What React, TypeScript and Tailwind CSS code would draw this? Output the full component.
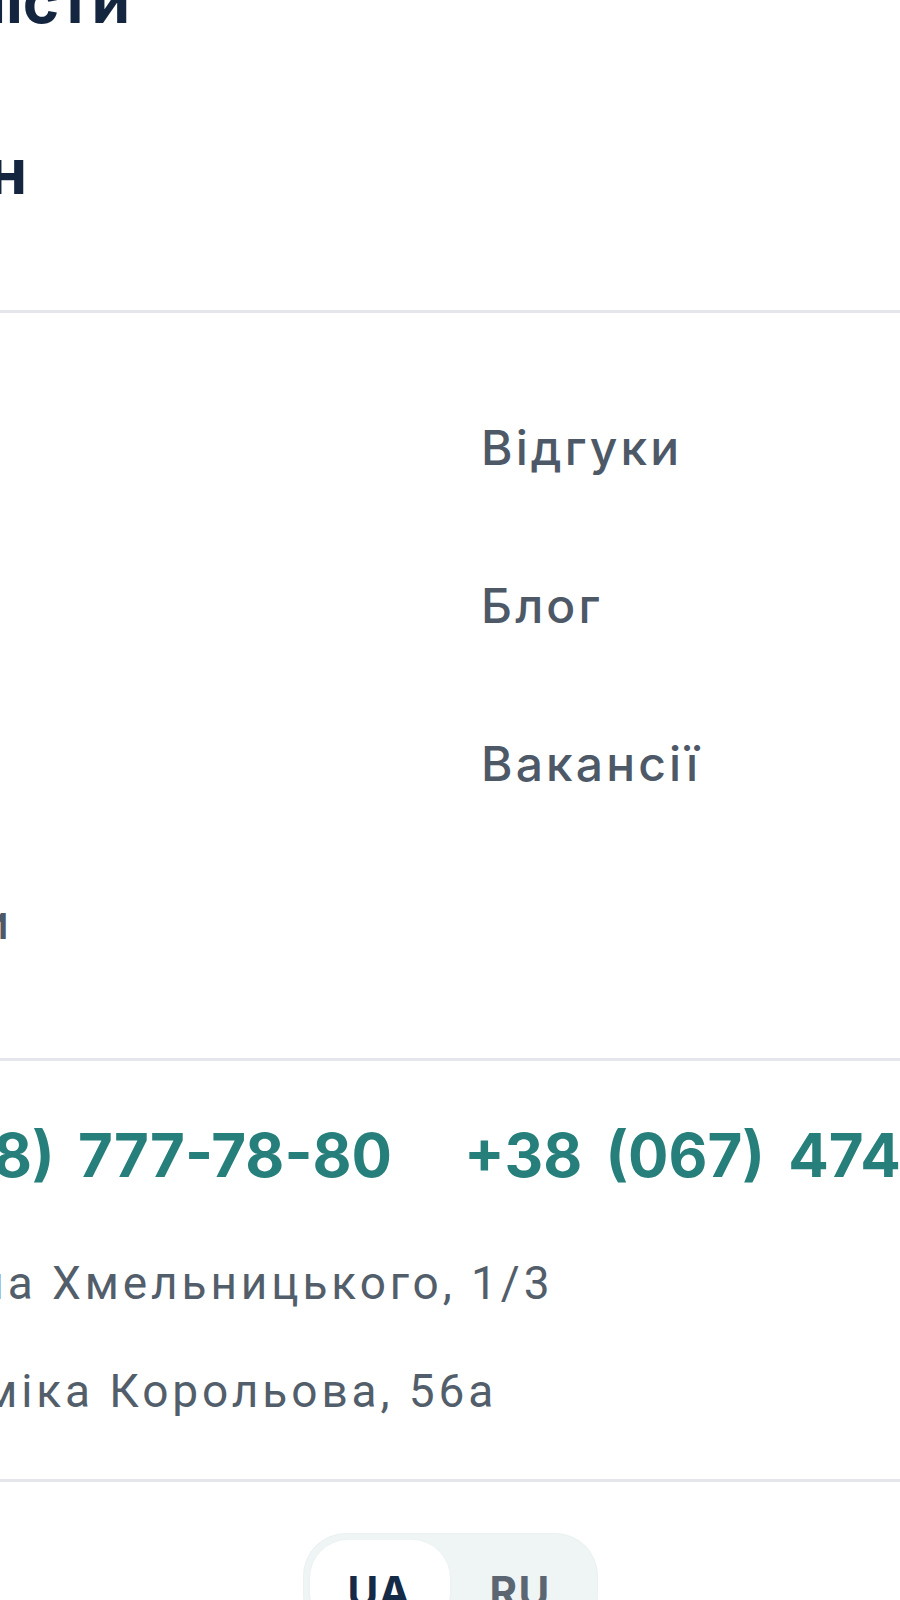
import React from 'react';

const headings = ['Наші спеціалісти', 'Нотаріус онлайн'];
const leftLinks = ['Про нас', 'Ціни', 'Новини', 'Контакти'];
const rightLinks = ['Відгуки', 'Блог', 'Вакансії'];
const phones = ['+38 (048) 777-78-80', '+38 (067) 474-78-80'];
const addresses = ['вул. Богдана Хмельницького, 1/3', 'вул. Академіка Корольова, 56а'];

function Divider() {
  return <div className="h-[3px] w-full shrink-0 bg-[#e4e6eb]" />;
}

function LangSwitch() {
  return (
    <div className="mx-auto mt-[52px] flex w-[293px] rounded-[42px] bg-[#eff5f4] p-[6px] shadow-[0_0_0_1px_rgba(220,232,230,0.6)]">
      <button className="h-[90px] w-[140px] rounded-[38px] bg-white pt-[13px] text-[42px] font-bold leading-[50px] tracking-[0.03em] text-[#152a47] shadow-[0_1px_3px_rgba(0,0,0,0.04)]">
        UA
      </button>
      <button className="h-[90px] flex-1 pt-[13px] text-[42px] font-bold leading-[50px] tracking-[0.03em] text-[#5c6672]">
        RU
      </button>
    </div>
  );
}

export default function App() {
  return (
    <div
      className="flex h-[1600px] w-[900px] flex-col overflow-hidden bg-white"
      style={{ fontFamily: 'Inter, "Noto Sans", sans-serif' }}
    >
      {/* section titles */}
      <div className="-mt-[35px] flex flex-col gap-[99px] pb-[102px]">
        <div className="flex w-[130px] justify-end whitespace-nowrap text-[62px] font-bold leading-[72px] text-[#142540]">
          {headings[0]}
        </div>
        <div className="flex w-[27px] justify-end whitespace-nowrap text-[62px] font-bold leading-[72px] text-[#142540]">
          {headings[1]}
        </div>
      </div>

      <Divider />

      {/* menu */}
      <div className="flex pt-[107px] pb-[108px] text-[48px] font-medium leading-[56px] tracking-[0.065em] text-[#4e5968]">
        <div className="-ml-[231px] flex w-[712px] shrink-0 flex-col gap-[102px] whitespace-nowrap">
          {leftLinks.map((link) => (
            <a key={link}>{link}</a>
          ))}
        </div>
        <div className="flex flex-col gap-[102px] whitespace-nowrap">
          {rightLinks.map((link) => (
            <a key={link}>{link}</a>
          ))}
        </div>
      </div>

      <Divider />

      {/* contacts */}
      <div className="-ml-[252px] flex gap-[72px] whitespace-nowrap pt-[58px] text-[60px] font-bold leading-[72px] text-[#267f7b] [word-spacing:9px]">
        {phones.map((p) => (
          <a key={p}>{p}</a>
        ))}
      </div>
      <div
        className="-ml-[285px] flex flex-col gap-[52px] whitespace-nowrap pt-[64px] pb-[60px] text-[46px] leading-[56px] tracking-[0.085em] text-[#535e6b]"
        style={{ fontFamily: 'Roboto, "Noto Sans", sans-serif' }}
      >
        {addresses.map((a) => (
          <div key={a}>{a}</div>
        ))}
      </div>

      <Divider />

      <LangSwitch />
    </div>
  );
}
